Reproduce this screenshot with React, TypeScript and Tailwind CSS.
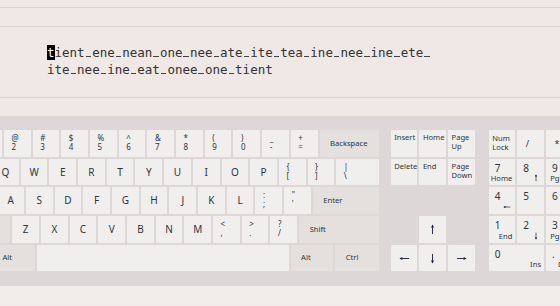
import React from "react";

type Sym = [string, string];
type Dir = "up" | "down" | "left" | "right";

const keyBase =
  "h-[26.7px] shrink-0 rounded-[1px] text-[#2d3440] font-['Noto_Sans',sans-serif]";
const light = "bg-[#f0efed]";
const dark = "bg-[#e3e0de]";

const Letter = ({ ch, w = 26.7 }: { ch: string; w?: number }) => (
  <div
    className={`${keyBase} ${light} flex items-center justify-center text-[10px]`}
    style={{ width: w }}
  >
    {ch}
  </div>
);

const SymKey = ({ s, w = 26.7 }: { s: Sym; w?: number }) => (
  <div
    className={`${keyBase} ${light} flex flex-col items-start pl-[7.5px] pt-[3px] text-[8px] leading-[9px]`}
    style={{ width: w }}
  >
    <span>{s[0]}</span>
    <span>{s[1]}</span>
  </div>
);

const Mod = ({ label, w, bg = dark }: { label: string; w: number; bg?: string }) => (
  <div
    className={`${keyBase} ${bg} flex items-center pl-[10.5px] text-[7.6px]`}
    style={{ width: w }}
  >
    {label}
  </div>
);

const row1: Sym[] = [
  ["~", "`"],
  ["!", "1"],
  ["@", "2"],
  ["#", "3"],
  ["$", "4"],
  ["%", "5"],
  ["^", "6"],
  ["&", "7"],
  ["*", "8"],
  ["(", "9"],
  [")", "0"],
  ["_", "-"],
  ["+", "="],
];

// thin arrow glyph drawn as svg, pointing right by default
const ArrowIcon = ({ dir, size = 11 }: { dir: Dir; size?: number }) => {
  const rot = { right: 0, down: 90, left: 180, up: 270 }[dir];
  return (
    <svg
      width={size}
      height={size}
      viewBox="0 0 12 12"
      style={{ transform: `rotate(${rot}deg)` }}
      className="text-[#1f2340]"
    >
      <path d="M1 6H10.5" stroke="currentColor" strokeWidth="1" fill="none" />
      <path d="M11.5 6L8.3 4.3V7.7Z" fill="currentColor" />
    </svg>
  );
};

// visible space marker between typed words
const Space = () => (
  <span className="inline-block w-[1ch] px-[1px] align-baseline">
    <span className="block h-[1px] bg-[#444]"></span>
  </span>
);

const Words = ({ words, trailing }: { words: string[]; trailing?: boolean }) => (
  <>
    {words.map((w, i) => (
      <React.Fragment key={i}>
        {w}
        {(i < words.length - 1 || trailing) && <Space />}
      </React.Fragment>
    ))}
  </>
);

const NavKey = ({ lines }: { lines: string[] }) => (
  <div
    className={`${keyBase} ${light} w-[26.7px] flex flex-col pl-[3.5px] pt-[3px] text-[7.6px] leading-[9px]`}
  >
    {lines.map((l) => (
      <span key={l}>{l}</span>
    ))}
  </div>
);

const Arrow = ({ dir }: { dir: Dir }) => (
  <div className={`${keyBase} ${light} w-[26.7px] flex items-center justify-center`}>
    <ArrowIcon dir={dir} />
  </div>
);

const Num = ({
  main,
  sub,
  arrow,
  className = "",
}: {
  main: string;
  sub?: string;
  arrow?: Dir;
  className?: string;
}) => (
  <div
    className={`${keyBase} ${light} h-auto w-auto flex flex-col justify-between px-[3px] pt-[4px] pb-[2px] ${className}`}
  >
    <span className="ml-[3px] text-[10px] leading-[11px]">{main}</span>
    {sub && <span className="self-end text-[7.6px] leading-[9px]">{sub}</span>}
    {arrow && (
      <span className="self-end mr-[1px] mb-[1px]">
        <ArrowIcon dir={arrow} size={8} />
      </span>
    )}
  </div>
);

export default function App() {
  return (
    <div className="w-[560px] h-[306px] overflow-hidden bg-[#f1edeb]">
      {/* text area */}
      <div className="bg-[#efe8e5]">
        <div className="h-[7px]" />
        <div className="h-[19px] border-t border-[#d9d3d0]" />
        <div className="h-[71px] border-t border-[#d9d3d0] pl-[47px] pt-[17px] font-['DejaVu_Sans_Mono',monospace] text-[12.5px] leading-[17px] text-[#333]">
          <div>
            <span className="bg-black text-white">t</span>
            {"ient"}
            <Space />
            <Words
              words={"ene nean one nee ate ite tea ine nee ine ete".split(" ")}
              trailing
            />
          </div>
          <div>
            <Words words={"ite nee ine eat onee one tient".split(" ")} />
          </div>
        </div>
        <div className="h-[19px] border-t border-[#d9d3d0]" />
      </div>

      {/* keyboard */}
      <div className="bg-[#ddd8d7] pt-[14px] pb-[15px] overflow-hidden">
        <div className="flex ml-[-53.4px] w-max">
          {/* main block */}
          <div className="flex flex-col gap-[2px] w-[432.4px]">
            <div className="flex gap-[2px]">
              {row1.map((s) => (
                <SymKey key={s[1]} s={s} />
              ))}
              <Mod label="Backspace" w={59.3} />
            </div>
            <div className="flex gap-[2px]">
              <Mod label="Tab" w={43.4} />
              {"QWERTYUIOP".split("").map((c) => (
                <Letter key={c} ch={c} />
              ))}
              <SymKey s={["{", "["]} />
              <SymKey s={["}", "]"]} />
              <SymKey s={["|", "\\"]} w={42.6} />
            </div>
            <div className="flex gap-[2px]">
              <Mod label="Caps" w={48.7} />
              {"ASDFGHJKL".split("").map((c) => (
                <Letter key={c} ch={c} />
              ))}
              <SymKey s={[":", ";"]} />
              <SymKey s={['"', "'"]} />
              <Mod label="Enter" w={66} />
            </div>
            <div className="flex gap-[2px]">
              <Mod label="Shift" w={63.7} />
              {"ZXCVBNM".split("").map((c) => (
                <Letter key={c} ch={c} />
              ))}
              <SymKey s={["<", ","]} />
              <SymKey s={[">", "."]} />
              <SymKey s={["?", "/"]} />
              <Mod label="Shift" w={79.7} />
            </div>
            <div className="flex gap-[2px]">
              <Mod label="Ctrl" w={43.4} />
              <Mod label="Alt" w={43} />
              <div className={`${keyBase} ${light} w-[251.6px]`} />
              <Mod label="Alt" w={42.7} />
              <Mod label="Ctrl" w={43.7} />
            </div>
          </div>

          {/* navigation block */}
          <div className="ml-[11.7px] grid grid-cols-[repeat(3,26.7px)] grid-rows-[repeat(5,26.7px)] gap-[2px]">
            <NavKey lines={["Insert"]} />
            <NavKey lines={["Home"]} />
            <NavKey lines={["Page", "Up"]} />
            <NavKey lines={["Delete"]} />
            <NavKey lines={["End"]} />
            <NavKey lines={["Page", "Down"]} />
            <div className="col-span-3" />
            <div />
            <Arrow dir="up" />
            <div />
            <Arrow dir="left" />
            <Arrow dir="down" />
            <Arrow dir="right" />
          </div>

          {/* numpad */}
          <div className="ml-[13.9px] grid grid-cols-[repeat(4,26.7px)] grid-rows-[repeat(5,26.7px)] gap-[2px]">
            <div
              className={`${keyBase} ${light} h-auto flex flex-col pl-[3.7px] pt-[4px] text-[7.6px] leading-[9px]`}
            >
              <span>Num</span>
              <span>Lock</span>
            </div>
            {["/", "*", "-"].map((c) => (
              <div
                key={c}
                className={`${keyBase} ${light} h-auto flex items-center pl-[8.5px] text-[9px]`}
              >
                {c}
              </div>
            ))}
            <Num main="7" sub="Home" />
            <Num main="8" arrow="up" />
            <Num main="9" sub="PgUp" />
            <Num main="+" className="row-span-2" />
            <Num main="4" arrow="left" />
            <Num main="5" />
            <Num main="6" arrow="right" />
            <Num main="1" sub="End" />
            <Num main="2" arrow="down" />
            <Num main="3" sub="PgDn" />
            <Num main="Enter" className="row-span-2" />
            <Num main="0" sub="Ins" className="col-span-2" />
            <Num main="." sub="Del" />
          </div>
        </div>
      </div>
    </div>
  );
}
